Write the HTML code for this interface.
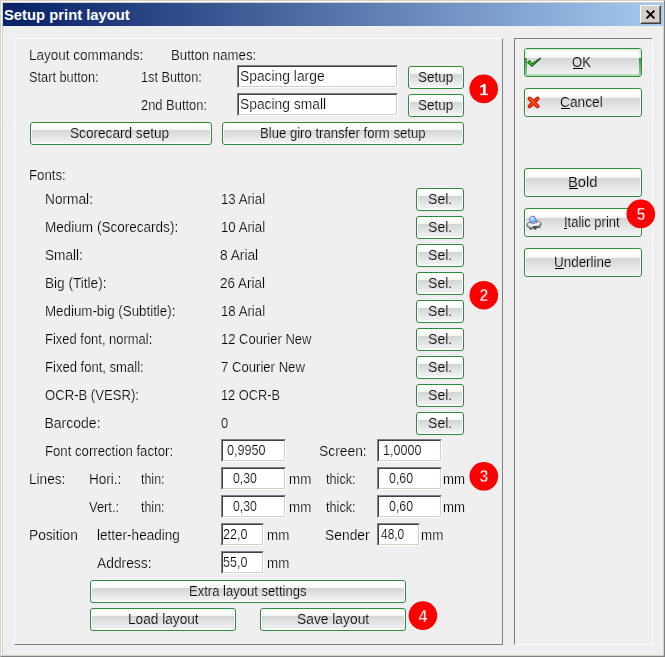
<!DOCTYPE html>
<html><head><meta charset="utf-8"><title>Setup print layout</title>
<style>
html,body{margin:0;padding:0;}
body{width:665px;height:657px;overflow:hidden;background:#d4d0c8;position:relative;font-family:"Liberation Sans",sans-serif;font-size:14px;color:#000;}
#win{position:absolute;left:0;top:0;width:665px;height:657px;background:#d4d0c8;overflow:hidden;}
.fr{position:absolute;box-sizing:border-box;}
#client{position:absolute;left:3px;top:26px;width:660px;height:629px;background:#efefef;}
#title{position:absolute;left:3px;top:3px;width:660px;height:23px;background:linear-gradient(to right,#0a246a 0%,#0a246a 3%,#a6caf0 100%);}
#cap{position:absolute;color:#fff;font-weight:bold;font-size:14px;line-height:16px;white-space:nowrap;transform-origin:0 0;}
#close{position:absolute;left:640px;top:5px;width:21px;height:19px;box-sizing:border-box;background:#d4d0c8;border:1px solid;border-color:#fff #404040 #404040 #fff;}
#close:before{content:"";position:absolute;left:0;top:0;right:0;bottom:0;border:1px solid;border-color:#d4d0c8 #808080 #808080 #d4d0c8;}
.t{position:absolute;white-space:nowrap;line-height:16px;font-size:14px;transform-origin:0 0;}
#tx{position:absolute;left:0;top:0;width:665px;height:657px;will-change:transform;}
.tl{-webkit-text-stroke:0.2px #efefef;}.ti{-webkit-text-stroke:0.2px #fff;}.tb{-webkit-text-stroke:0.2px #dfdfdf;}
.ul{position:absolute;height:1px;background:#000;}
.btn{position:absolute;box-sizing:border-box;border:1px solid #2f8a3e;border-radius:3px;background:#fff;overflow:hidden;}
.btn i{position:absolute;left:1px;right:1px;top:7px;bottom:1px;background:linear-gradient(to bottom,#d4d4d4 0%,#f3f3f3 100%);}
.btn:before{content:"";position:absolute;left:1px;right:1px;top:1px;height:6px;background:linear-gradient(to bottom,#fff 30%,#f5f5f5 100%);}
.btn.big:before{height:8px;}
.btn.big i{top:9px;bottom:1px;}
.btn.ok i{bottom:2px;}
.ok b{position:absolute;display:block;}
.ok .bt{left:0;right:0;top:0;height:2px;background:linear-gradient(to bottom,#cfe8d1,#f2f9f2);}
.ok .bb{left:0;right:0;bottom:0;height:2px;background:linear-gradient(to bottom,#c3e2c6,#aad6af);}
.ok .bl,.ok .br{top:0;bottom:0;width:2px;background:linear-gradient(to bottom,#d8ecd9 0px,#eef7ee 9px,#3a8d45 9px,#56a35f 14px,#9ccfa2 27px);}
.ok .bl{left:0;} .ok .br{right:0;}
.ico{position:absolute;overflow:visible;}
.inp{position:absolute;box-sizing:border-box;background:#fff;border:1px solid;border-color:#808080 #fff #fff #808080;}
.inp:before{content:"";position:absolute;left:0;top:0;right:0;bottom:0;border:1px solid;border-color:#404040 #d4d0c8 #d4d0c8 #404040;}
.cn{position:absolute;width:20px;height:20px;color:#fff;font-weight:bold;font-size:16px;line-height:20px;text-align:center;will-change:transform;-webkit-text-stroke:0.55px #ff0000;}
</style></head><body>
<div id="win">
<div class="fr" style="left:0;top:0;width:665px;height:657px;border:1px solid;border-color:#d4d0c8 #808080 #808080 #d4d0c8;"></div>
<div class="fr" style="left:1px;top:1px;width:663px;height:655px;border:1px solid;border-color:#fff #d4d0c8 #d4d0c8 #fff;"></div>
<div id="title"></div>
<div id="cap" style="left:4.4px;top:7px;transform:scaleX(1.057)">Setup print layout</div>
<div id="close"><svg width="19" height="17" style="position:absolute;left:0;top:0"><path d="M5.6 4.6 L13.4 12.4 M13.4 4.6 L5.6 12.4" stroke="#000" stroke-width="2" fill="none"/></svg></div>
<div id="client"></div>

<div class="fr" style="left:14px;top:38px;width:489px;height:607px;border:1px solid;border-color:#fff #808080 #808080 #fff;"></div>
<div class="fr" style="left:514px;top:38px;width:139px;height:607px;border:1px solid;border-color:#808080 #fff #fff #808080;"></div>
<div class="inp" style="left:237px;top:65px;width:161px;height:23px"></div>
<div class="inp" style="left:237px;top:93px;width:161px;height:23px"></div>
<div class="btn " style="left:408px;top:66px;width:56px;height:23px"><i></i></div>
<div class="btn " style="left:408px;top:94px;width:56px;height:23px"><i></i></div>
<div class="btn " style="left:30px;top:122px;width:182px;height:23px"><i></i></div>
<div class="btn " style="left:222px;top:122px;width:242px;height:23px"><i></i></div>
<div class="btn " style="left:416px;top:188px;width:48px;height:23px"><i></i></div>
<div class="btn " style="left:416px;top:216px;width:48px;height:23px"><i></i></div>
<div class="btn " style="left:416px;top:244px;width:48px;height:23px"><i></i></div>
<div class="btn " style="left:416px;top:272px;width:48px;height:23px"><i></i></div>
<div class="btn " style="left:416px;top:300px;width:48px;height:23px"><i></i></div>
<div class="btn " style="left:416px;top:328px;width:48px;height:23px"><i></i></div>
<div class="btn " style="left:416px;top:356px;width:48px;height:23px"><i></i></div>
<div class="btn " style="left:416px;top:384px;width:48px;height:23px"><i></i></div>
<div class="btn " style="left:416px;top:412px;width:48px;height:23px"><i></i></div>
<div class="inp" style="left:221px;top:439px;width:65px;height:23px"></div>
<div class="inp" style="left:377px;top:439px;width:65px;height:23px"></div>
<div class="inp" style="left:221px;top:467px;width:65px;height:23px"></div>
<div class="inp" style="left:377px;top:467px;width:65px;height:23px"></div>
<div class="inp" style="left:221px;top:495px;width:65px;height:23px"></div>
<div class="inp" style="left:377px;top:495px;width:65px;height:23px"></div>
<div class="inp" style="left:221px;top:523px;width:43px;height:23px"></div>
<div class="inp" style="left:377px;top:523px;width:43px;height:23px"></div>
<div class="inp" style="left:221px;top:551px;width:43px;height:23px"></div>
<div class="btn " style="left:90px;top:580px;width:316px;height:23px"><i></i></div>
<div class="btn " style="left:90px;top:608px;width:146px;height:23px"><i></i></div>
<div class="btn " style="left:260px;top:608px;width:146px;height:23px"><i></i></div>
<div class="btn big ok" style="left:524px;top:48px;width:118px;height:29px"><i></i><b class="bt"></b><b class="bb"></b><b class="bl"></b><b class="br"></b></div>
<div class="btn big" style="left:524px;top:88px;width:118px;height:29px"><i></i></div>
<div class="btn big" style="left:524px;top:168px;width:118px;height:29px"><i></i></div>
<div class="btn big" style="left:524px;top:208px;width:118px;height:29px"><i></i></div>
<div class="btn big" style="left:524px;top:248px;width:118px;height:29px"><i></i></div>

<svg class="ico" style="left:526px;top:56px" width="17" height="13" viewBox="526 56 17 13"><polygon points="527.4,62.5 529.6,60.5 532.1,63.7 540.3,58.1 540.7,58.6 532,66.5" fill="#27b41a" stroke="#075207" stroke-width="1" stroke-linejoin="round"/><polygon points="528.5,62.4 529.6,61.5 531.8,64.3 531.6,65" fill="#5fe040" opacity="0.6"/></svg>
<svg class="ico" style="left:526px;top:95px" width="16" height="15" viewBox="526 95 16 15"><g stroke-linecap="round" fill="none"><path d="M529.6 98.5 L537.6 106.3 M537.6 98.5 L529.6 106.3" stroke="#b01000" stroke-width="3.9"/><path d="M529.6 98.5 L537.6 106.3 M537.6 98.5 L529.6 106.3" stroke="#ff3c08" stroke-width="2.4"/><path d="M529.8 98.4 L533 101.5" stroke="#ff7030" stroke-width="1.2"/></g></svg>
<svg class="ico" style="left:526px;top:215px" width="16" height="16" viewBox="0 0 16 16"><defs><linearGradient id="pg" x1="0" y1="0" x2="1" y2="1"><stop offset="0" stop-color="#f4faff"/><stop offset="0.55" stop-color="#8cc6ff"/><stop offset="1" stop-color="#5aa0f0"/></linearGradient></defs>
<polygon points="1,9.2 4.6,6.8 12.8,6.2 15,8.2 15,10.2 11,13 4.2,13.4 1,11" fill="#b4bcb4" stroke="#3c463c" stroke-width="0.9" stroke-linejoin="round"/>
<polygon points="1.3,9.2 4.8,7 12.6,6.5 14.6,8.2 10.8,10.8 4.2,11.2" fill="#f2f2f2"/>
<polygon points="3.3,3 5.8,1.3 8.4,1.4 10.8,6.4 4.6,7.8" fill="url(#pg)" stroke="#4f5acb" stroke-width="0.8" stroke-linejoin="round"/>
<polygon points="4.8,8.3 11.2,7 12.2,8 5.6,9.4" fill="#9aa09a"/>
<polygon points="7,11.6 11.4,11.2 11.4,12.2 7,12.6" fill="#000"/>
<rect x="3.6" y="13.4" width="2" height="1.2" fill="#303830"/><rect x="8" y="13.4" width="2.2" height="1.2" fill="#303830"/><rect x="12.4" y="11.6" width="2" height="1.1" fill="#303830"/>
</svg>

<div id="tx">
<div class="t tl" style="left:28.53px;top:47px;transform:scaleX(0.9655)">Layout commands:</div>
<div class="t tl" style="left:171.06px;top:47px;transform:scaleX(0.9432)">Button names:</div>
<div class="t tl" style="left:28.59px;top:69px;transform:scaleX(0.9122)">Start button:</div>
<div class="t tl" style="left:140.59px;top:69px;transform:scaleX(0.9077)">1st Button:</div>
<div class="t tl" style="left:140.58px;top:97px;transform:scaleX(0.9214)">2nd Button:</div>
<div class="t ti" style="left:239.51px;top:68px;transform:scaleX(0.9881)">Spacing large</div>
<div class="t ti" style="left:239.51px;top:96px;transform:scaleX(0.9882)">Spacing small</div>
<div class="t tb" style="left:417.79px;top:69px;transform:scaleX(0.9643)">Setup</div>
<div class="t tb" style="left:417.79px;top:97px;transform:scaleX(0.9643)">Setup</div>
<div class="t tb" style="left:70.28px;top:125px;transform:scaleX(0.9728)">Scorecard setup</div>
<div class="t tb" style="left:259.56px;top:125px;transform:scaleX(0.9371)">Blue giro transfer form setup</div>
<div class="t tl" style="left:28.55px;top:167px;transform:scaleX(0.9459)">Fonts:</div>
<div class="t tl" style="left:44.52px;top:191px;transform:scaleX(0.9787)">Normal:</div>
<div class="t tl" style="left:221.06px;top:191px;transform:scaleX(0.9444)">13 Arial</div>
<div class="t tb" style="left:427.50px;top:191px;transform:scaleX(1.0045)">Sel.</div>
<div class="t tl" style="left:44.53px;top:219px;transform:scaleX(0.9669)">Medium (Scorecards):</div>
<div class="t tl" style="left:221.06px;top:219px;transform:scaleX(0.9444)">10 Arial</div>
<div class="t tb" style="left:427.50px;top:219px;transform:scaleX(1.0045)">Sel.</div>
<div class="t tl" style="left:44.53px;top:247px;transform:scaleX(0.9730)">Small:</div>
<div class="t tl" style="left:220.27px;top:247px;transform:scaleX(0.9797)">8 Arial</div>
<div class="t tb" style="left:427.50px;top:247px;transform:scaleX(1.0045)">Sel.</div>
<div class="t tl" style="left:44.53px;top:275px;transform:scaleX(0.9713)">Big (Title):</div>
<div class="t tl" style="left:220.29px;top:275px;transform:scaleX(0.9611)">26 Arial</div>
<div class="t tb" style="left:427.50px;top:275px;transform:scaleX(1.0045)">Sel.</div>
<div class="t tl" style="left:44.55px;top:303px;transform:scaleX(0.9519)">Medium-big (Subtitle):</div>
<div class="t tl" style="left:221.06px;top:303px;transform:scaleX(0.9444)">18 Arial</div>
<div class="t tb" style="left:427.50px;top:303px;transform:scaleX(1.0045)">Sel.</div>
<div class="t tl" style="left:44.57px;top:331px;transform:scaleX(0.9254)">Fixed font, normal:</div>
<div class="t tl" style="left:221.07px;top:331px;transform:scaleX(0.9297)">12 Courier New</div>
<div class="t tb" style="left:427.50px;top:331px;transform:scaleX(1.0045)">Sel.</div>
<div class="t tl" style="left:44.57px;top:359px;transform:scaleX(0.9327)">Fixed font, small:</div>
<div class="t tl" style="left:220.56px;top:359px;transform:scaleX(0.9375)">7 Courier New</div>
<div class="t tb" style="left:427.50px;top:359px;transform:scaleX(1.0045)">Sel.</div>
<div class="t tl" style="left:44.56px;top:387px;transform:scaleX(0.9362)">OCR-B (VESR):</div>
<div class="t tl" style="left:221.09px;top:387px;transform:scaleX(0.9127)">12 OCR-B</div>
<div class="t tb" style="left:427.50px;top:387px;transform:scaleX(1.0045)">Sel.</div>
<div class="t tl" style="left:44.50px;top:415px;transform:scaleX(1.0000)">Barcode:</div>
<div class="t tl" style="left:221.08px;top:415px;transform:scaleX(0.9167)">0</div>
<div class="t tb" style="left:427.50px;top:415px;transform:scaleX(1.0045)">Sel.</div>
<div class="t tl" style="left:44.56px;top:443px;transform:scaleX(0.9403)">Font correction factor:</div>
<div class="t ti" style="left:227.10px;top:442px;transform:scaleX(0.9024)">0,9950</div>
<div class="t tl" style="left:318.51px;top:443px;transform:scaleX(0.9891)">Screen:</div>
<div class="t ti" style="left:382.85px;top:442px;transform:scaleX(0.8963)">1,0000</div>
<div class="t tl" style="left:28.53px;top:471px;transform:scaleX(0.9714)">Lines:</div>
<div class="t tl" style="left:88.78px;top:471px;transform:scaleX(0.9677)">Hori.:</div>
<div class="t tl" style="left:141.10px;top:471px;transform:scaleX(0.8880)">thin:</div>
<div class="t ti" style="left:232.88px;top:470px;transform:scaleX(0.8750)">0,30</div>
<div class="t tl" style="left:288.55px;top:471px;transform:scaleX(0.9545)">mm</div>
<div class="t tl" style="left:325.50px;top:471px;transform:scaleX(0.9062)">thick:</div>
<div class="t ti" style="left:388.62px;top:470px;transform:scaleX(0.8846)">0,60</div>
<div class="t tl" style="left:442.56px;top:471px;transform:scaleX(0.9432)">mm</div>
<div class="t tl" style="left:89.00px;top:499px;transform:scaleX(0.9219)">Vert.:</div>
<div class="t tl" style="left:141.10px;top:499px;transform:scaleX(0.8880)">thin:</div>
<div class="t ti" style="left:232.88px;top:498px;transform:scaleX(0.8750)">0,30</div>
<div class="t tl" style="left:288.55px;top:499px;transform:scaleX(0.9545)">mm</div>
<div class="t tl" style="left:325.50px;top:499px;transform:scaleX(0.9062)">thick:</div>
<div class="t ti" style="left:388.62px;top:498px;transform:scaleX(0.8846)">0,60</div>
<div class="t tl" style="left:442.56px;top:499px;transform:scaleX(0.9432)">mm</div>
<div class="t tl" style="left:28.52px;top:527px;transform:scaleX(0.9792)">Position</div>
<div class="t tl" style="left:96.53px;top:527px;transform:scaleX(0.9673)">letter-heading</div>
<div class="t ti" style="left:223.36px;top:526px;transform:scaleX(0.8942)">22,0</div>
<div class="t tl" style="left:266.55px;top:527px;transform:scaleX(0.9545)">mm</div>
<div class="t tl" style="left:324.51px;top:527px;transform:scaleX(0.9886)">Sender</div>
<div class="t ti" style="left:380.50px;top:526px;transform:scaleX(0.8519)">48,0</div>
<div class="t tl" style="left:420.55px;top:527px;transform:scaleX(0.9545)">mm</div>
<div class="t tl" style="left:97.10px;top:555px;transform:scaleX(0.9870)">Address:</div>
<div class="t ti" style="left:223.36px;top:554px;transform:scaleX(0.8942)">55,0</div>
<div class="t tl" style="left:266.55px;top:555px;transform:scaleX(0.9545)">mm</div>
<div class="t tb" style="left:189.07px;top:583px;transform:scaleX(0.9320)">Extra layout settings</div>
<div class="t tb" style="left:127.77px;top:611px;transform:scaleX(0.9754)">Load layout</div>
<div class="t tb" style="left:296.51px;top:611px;transform:scaleX(0.9861)">Save layout</div>
<div class="t tb" style="left:572.47px;top:54px;transform:scaleX(0.9316)">OK</div><div class="ul" style="left:573.4px;top:68px;width:9.5px"></div>
<div class="t tb" style="left:560.42px;top:94px;transform:scaleX(0.9810)">Cancel</div><div class="ul" style="left:561.2px;top:108px;width:8.6px"></div>
<div class="t tb" style="left:568.15px;top:174px;transform:scaleX(1.0538)">Bold</div><div class="ul" style="left:569.2px;top:188px;width:8.6px"></div>
<div class="t tb" style="left:563.67px;top:214px;transform:scaleX(0.9288)">Italic print</div><div class="ul" style="left:563.7px;top:228px;width:3.7px"></div>
<div class="t tb" style="left:553.64px;top:254px;transform:scaleX(0.9593)">Underline</div><div class="ul" style="left:554.6px;top:268px;width:9.1px"></div>
</div>
<svg class="ico" style="left:467px;top:72px" width="32" height="32" viewBox="467 72 32 32"><circle cx="483.7" cy="88.9" r="14.3" fill="#ff0000"/></svg><svg class="ico" style="left:476px;top:80px" width="16" height="18" viewBox="476 80 16 18"><g fill="#fff"><rect x="483" y="84" width="2.6" height="10.2"/><polygon points="483.4,84 485,84 485,86 480.2,87.7 480.2,86.2"/><rect x="480.1" y="93.7" width="7.9" height="1.45"/></g></svg>
<svg class="ico" style="left:467px;top:279px" width="32" height="32" viewBox="467 279 32 32"><circle cx="483.8" cy="295.2" r="14.3" fill="#ff0000"/></svg><div class="cn" style="left:473.8px;top:285.59999999999997px"><span>2</span></div>
<svg class="ico" style="left:467px;top:460px" width="32" height="32" viewBox="467 460 32 32"><circle cx="483.8" cy="476.3" r="14.3" fill="#ff0000"/></svg><div class="cn" style="left:473.8px;top:466.90000000000003px"><span>3</span></div>
<svg class="ico" style="left:406px;top:599px" width="32" height="32" viewBox="406 599 32 32"><circle cx="422.9" cy="615.6" r="14.3" fill="#ff0000"/></svg><div class="cn" style="left:412.9px;top:606.6px"><span>4</span></div>
<svg class="ico" style="left:624px;top:197px" width="32" height="32" viewBox="624 197 32 32"><circle cx="640.8" cy="213.9" r="14.3" fill="#ff0000"/></svg><div class="cn" style="left:630.8px;top:204.9px"><span>5</span></div>
</div></body></html>
